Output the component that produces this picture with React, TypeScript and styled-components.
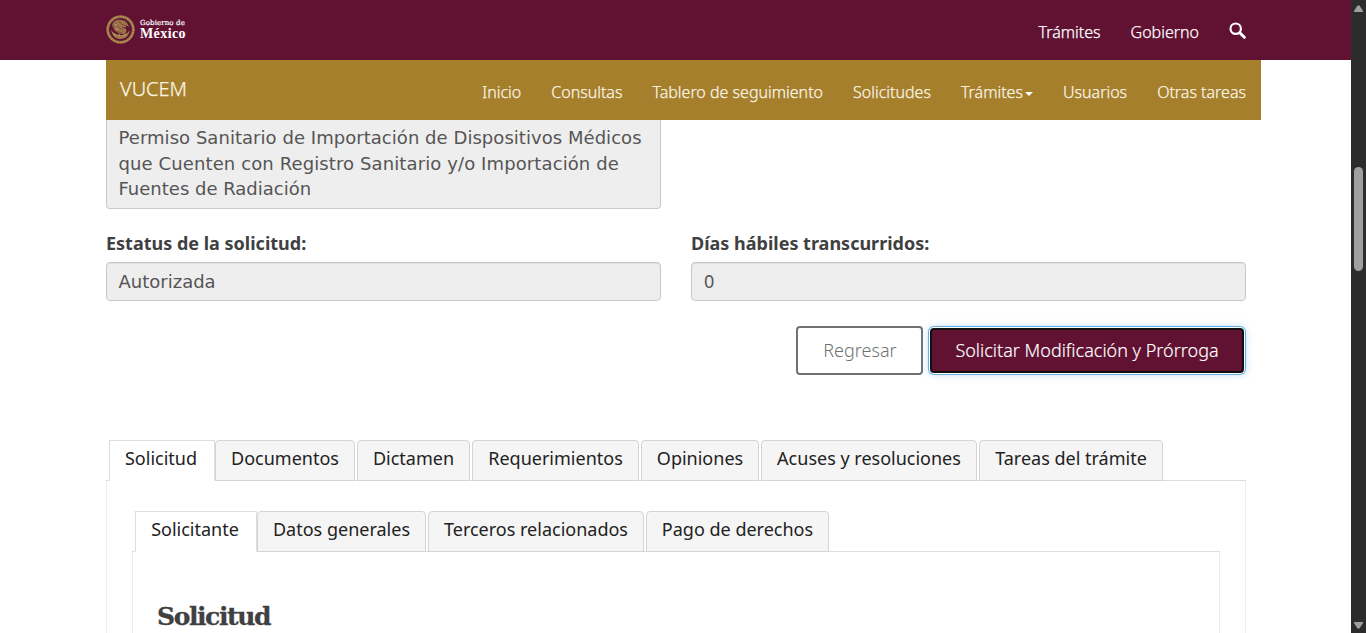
import React from "react";
import styled, { createGlobalStyle } from "styled-components";

const Global = createGlobalStyle`
  * { box-sizing: border-box; }
  html, body { margin: 0; padding: 0; overflow: hidden; background: #fff; }
  body { font-family: "Noto Sans", "Open Sans", sans-serif; font-size: 18px; color: #404041; }
`;

const Window = styled.div`
  display: flex;
  width: 1366px;
  height: 633px;
  overflow: hidden;
`;

const Page = styled.div`
  flex: 1;
  min-width: 0;
  height: 633px;
  overflow: hidden;
`;

const TopBar = styled.header`
  display: flex;
  align-items: flex-start;
  justify-content: space-between;
  height: 60px;
  padding: 0 105px 0 106px;
  background: #611232;
`;

const Brand = styled.a`
  display: flex;
  gap: 5px;
  padding-top: 15px;
  color: #fff;
`;

const BrandText = styled.span`
  display: flex;
  flex-direction: column;
  padding-top: 4px;
  white-space: nowrap;
`;

const BrandSmall = styled.span`
  font-family: "DejaVu Serif", serif;
  font-size: 7px;
  line-height: 9px;
  letter-spacing: 0.12px;
  -webkit-text-stroke: 0.2px #fff;
`;

const BrandLarge = styled.span`
  font-family: "Liberation Serif", serif;
  font-size: 14px;
  font-weight: 700;
  line-height: 11px;
  letter-spacing: 0.4px;
`;

const TopLinks = styled.nav`
  display: flex;
  gap: 30px;
  padding-top: 20px;
`;

const NavLink = styled.a<{ $soft?: boolean }>`
  display: inline-flex;
  align-items: center;
  font-size: 16px;
  line-height: 24px;
  font-weight: 300;
  color: ${(p) => (p.$soft ? "#fbf5e6" : "#fff")};
  -webkit-text-stroke: 0.25px currentColor;
  white-space: nowrap;
`;

const SearchIcon = styled.svg`
  width: 17px;
  height: 17px;
  margin-top: 2px;
`;

const SubBar = styled.nav`
  display: flex;
  justify-content: space-between;
  width: 1155px;
  height: 60px;
  margin-left: 106px;
  padding: 0 15px 0 14px;
  background: #a57f2c;
`;

const SubBrand = styled.span`
  padding-top: 15px;
  font-size: 20px;
  line-height: 28px;
  font-weight: 300;
  color: #fbf5e6;
  -webkit-text-stroke: 0.25px currentColor;
`;

const SubLinks = styled.div`
  display: flex;
  align-items: flex-start;
  gap: 30px;
  padding-top: 20px;
`;

const Caret = styled.span`
  margin: 3px 0 0 2px;
  border-top: 4px solid #fff;
  border-left: 4px solid transparent;
  border-right: 4px solid transparent;
`;

const Content = styled.main`
  width: 1140px;
  margin-left: 106px;
`;

const TextArea = styled.div`
  display: flex;
  flex-direction: column;
  width: 555px;
  height: 89px;
  padding: 5px 12px 5px 11.5px;
  border: 1px solid #c8c8c8;
  border-top: 0;
  border-radius: 0 0 4px 4px;
  background: #eee;
  color: #555;
  font-family: "DejaVu Sans", Verdana, sans-serif;
  font-size: 18px;
  line-height: 25.7px;
  white-space: nowrap;
`;

const Line = styled.span<{ $track: number }>`
  letter-spacing: ${(p) => p.$track}px;
`;

const FieldRow = styled.div`
  display: grid;
  grid-template-columns: 555px 555px;
  gap: 30px;
  padding-top: 22px;
`;

const Field = styled.div`
  display: flex;
  flex-direction: column;
`;

const Label = styled.label`
  height: 31px;
  line-height: 25px;
  font-weight: 700;
  color: #404041;
`;

const Input = styled.div<{ $noto?: boolean }>`
  height: 39px;
  padding: 0 ${(p) => (p.$noto ? 12 : 11.5)}px;
  border: 1px solid #c8c8c8;
  border-radius: 4px;
  background: #eee;
  box-shadow: inset 0 1px 1px rgba(0, 0, 0, 0.075);
  color: #555;
  font-family: ${(p) => (p.$noto ? '"Noto Sans"' : '"DejaVu Sans"')}, sans-serif;
  line-height: 37px;
`;

const Actions = styled.div`
  display: flex;
  justify-content: flex-end;
  gap: 5px;
  margin-top: 25px;
`;

const Button = styled.button`
  width: 127px;
  height: 49px;
  padding: 0 0 2px 1px;
  border: 2px solid #6f7271;
  border-radius: 4px;
  background: #fff;
  color: #6f7271;
  font-family: inherit;
  font-size: 18px;
  font-weight: 300;
  white-space: nowrap;
`;

const FocusButton = styled(Button)`
  width: 314px;
  height: 45px;
  margin: 2px;
  padding-left: 0;
  border-color: #101010;
  outline: 0;
  background: #611232;
  box-shadow: 0 0 0 1px #fff, 0 0 0 2px #66afe9, 0 0 10px rgba(102, 175, 233, 0.6);
  color: #fff;
  -webkit-text-stroke: 0.15px #fff;
`;

const Tabs = styled.div`
  display: flex;
  gap: 2px;
  height: 41px;
  padding-left: 3px;
  border-bottom: 1px solid #ddd;
`;

const Tab = styled.div<{ $active?: boolean; $w: number }>`
  width: ${(p) => p.$w}px;
  height: 41px;
  flex: none;
  margin-right: ${(p) => (p.$active ? -2 : 0)}px;
  padding-right: ${(p) => (p.$active ? 2 : 0)}px;
  border: 1px solid ${(p) => (p.$active ? "#ddd" : "#d4d4d4")};
  border-bottom-color: ${(p) => (p.$active ? "#fff" : "#d4d4d4")};
  border-radius: ${(p) => (p.$active ? "0" : "4px 4px 0 0")};
  background: ${(p) => (p.$active ? "#fff" : "#f5f5f5")};
  color: #222;
  line-height: 34px;
  text-align: center;
  white-space: nowrap;
`;

const TabArea = styled.section`
  margin-top: 65px;
`;

const Panel = styled.div`
  height: 160px;
  padding: 30px 25px 0 25px;
  border: 1px solid #eee;
  border-top: 0;
`;

const InnerPanel = styled.div`
  height: 90px;
  padding: 48px 24px 0;
  border: 1px solid #eee;
  border-top: 0;
`;

const Heading = styled.h3`
  margin: 0;
  font-family: "DejaVu Serif", serif;
  font-size: 25px;
  line-height: 34px;
  font-weight: 700;
  letter-spacing: -1.4px;
  color: #404041;
  -webkit-text-stroke: 0.3px #404041;
`;

const Scrollbar = styled.div`
  display: flex;
  flex-direction: column;
  justify-content: space-between;
  align-items: center;
  width: 15px;
  height: 633px;
  padding: 5px 0 4px;
  background: #2c2c2c;
`;

const Arrow = styled.svg`
  width: 9px;
  height: 7px;
`;

const Track = styled.div`
  flex: 1;
  padding-top: 155px;
`;

const Thumb = styled.div`
  width: 9px;
  height: 104px;
  border-radius: 5px;
  background: #9f9f9f;
`;

const Emblem = () => (
  <svg width="29" height="29" viewBox="0 0 29 29" fill="none">
    <circle cx="14.5" cy="14.5" r="12.7" stroke="#8c6442" strokeWidth="3" />
    <circle cx="14.5" cy="14.5" r="12.9" stroke="#b3945a" strokeWidth="1.8" strokeDasharray="1.7 .7" />
    <circle cx="14.5" cy="14.5" r="10.6" stroke="#611232" strokeWidth="1" />
    <path d="M6 10c1-4 5-6 9-5 4 0 7 3 8 7-3-2-5-2-7 0l4 2c1 2 0 5-3 5-5 0-9-3-11-9Z" fill="#9c7549" />
    <path d="M7 9c1 5 4 8 9 9M9 7c2 4 4 6 8 8M13 6c1 3 4 4 8 5" stroke="#743842" strokeWidth=".7" />
    <path d="M5 15c1 5 4 9 9 9 6 0 9-4 10-9-3 4-6 5-9 5s-7-1-10-5Z" fill="#a17b4b" />
    <path d="m7 18 3 3m2 0 2-2m3 2 3-2m-8-5-3 1m8-4 3 1M9 9l2 1" stroke="#c6a66a" strokeWidth=".9" />
  </svg>
);

const subLinks = ["Inicio", "Consultas", "Tablero de seguimiento", "Solicitudes", "Trámites", "Usuarios", "Otras tareas"];

const mainTabs: [string, number][] = [
  ["Solicitud", 106],
  ["Documentos", 140],
  ["Dictamen", 113],
  ["Requerimientos", 167],
  ["Opiniones", 118],
  ["Acuses y resoluciones", 216],
  ["Tareas del trámite", 184],
];

const innerTabs: [string, number][] = [
  ["Solicitante", 122],
  ["Datos generales", 169],
  ["Terceros relacionados", 216],
  ["Pago de derechos", 183],
];

export default function App() {
  return (
    <Window>
      <Global />
      <Page>
        <TopBar>
          <Brand>
            <Emblem />
            <BrandText>
              <BrandSmall>Gobierno de</BrandSmall>
              <BrandLarge>México</BrandLarge>
            </BrandText>
          </Brand>
          <TopLinks>
            <NavLink>Trámites</NavLink>
            <NavLink>Gobierno</NavLink>
            <SearchIcon viewBox="0 0 17 17" fill="none" stroke="#fff">
              <circle cx="6.7" cy="6.7" r="5.2" strokeWidth="2.2" />
              <path d="m10.8 10.8 4.5 4.5" strokeWidth="3" strokeLinecap="round" />
            </SearchIcon>
          </TopLinks>
        </TopBar>
        <SubBar>
          <SubBrand>VUCEM</SubBrand>
          <SubLinks>
            {subLinks.map((label) => (
              <NavLink $soft key={label}>
                {label}
                {label === "Trámites" && <Caret />}
              </NavLink>
            ))}
          </SubLinks>
        </SubBar>
        <Content>
          <TextArea>
            <Line $track={0.045}>Permiso Sanitario de Importación de Dispositivos Médicos</Line>
            <Line $track={0.11}>que Cuenten con Registro Sanitario y/o Importación de</Line>
            <Line $track={0}>Fuentes de Radiación</Line>
          </TextArea>
          <FieldRow>
            <Field>
              <Label>Estatus de la solicitud:</Label>
              <Input>Autorizada</Input>
            </Field>
            <Field>
              <Label>Días hábiles transcurridos:</Label>
              <Input $noto>0</Input>
            </Field>
          </FieldRow>
          <Actions>
            <Button>Regresar</Button>
            <FocusButton>Solicitar Modificación y Prórroga</FocusButton>
          </Actions>
          <TabArea>
            <Tabs>
              {mainTabs.map(([label, w], i) => (
                <Tab key={label} $w={w} $active={i === 0}>{label}</Tab>
              ))}
            </Tabs>
            <Panel>
              <Tabs>
                {innerTabs.map(([label, w], i) => (
                  <Tab key={label} $w={w} $active={i === 0}>{label}</Tab>
                ))}
              </Tabs>
              <InnerPanel>
                <Heading>Solicitud</Heading>
              </InnerPanel>
            </Panel>
          </TabArea>
        </Content>
      </Page>
      <Scrollbar>
        <Arrow viewBox="0 0 9 7" fill="#9f9f9f"><path d="M3.5.5h2L9 6v1H0V6Z" /></Arrow>
        <Track><Thumb /></Track>
        <Arrow viewBox="0 0 9 7" fill="#9f9f9f"><path d="M3.5 6.5h2L9 1V0H0v1Z" /></Arrow>
      </Scrollbar>
    </Window>
  );
}
